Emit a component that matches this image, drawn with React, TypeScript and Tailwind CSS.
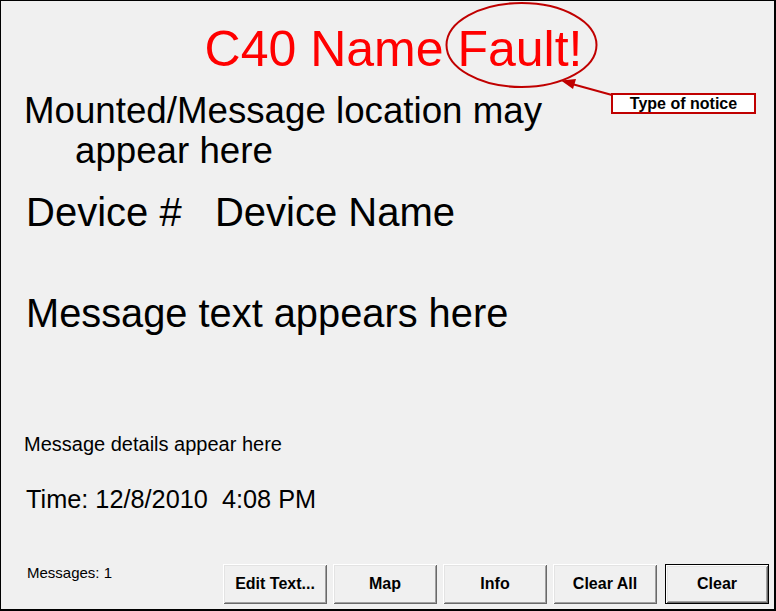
import React from "react";

const btnBase =
  "w-[104px] h-[40px] bg-[#f0f0f0] text-[16px] font-bold text-black flex items-center justify-center";
const bevel =
  "shadow-[inset_1px_1px_0_#ffffff,inset_-1px_-1px_0_#696969,inset_2px_2px_0_#e3e3e3,inset_-2px_-2px_0_#a0a0a0]";

function Btn({ label }: { label: string }) {
  return <div className={`${btnBase} ${bevel}`}>{label}</div>;
}

export default function App() {
  return (
    <div
      className="relative w-[776px] h-[611px]"
      style={{ fontFamily: '"Liberation Sans", Arial, sans-serif' }}
    >
      <div className="w-[776px] h-[611px] bg-[#f0f0f0] border-l border-t border-r-2 border-b-2 border-black flex flex-col text-black">
        <div className="pt-[20px] pl-[12px] text-center text-[50px] leading-[56px] text-[#ff0000]">
          C40 Name Fault!
        </div>
        <div className="mt-[14px] pl-[23px] text-[36.7px] leading-[40px]">
          <div>Mounted/Message location may</div>
          <div className="pl-[51px]">appear here</div>
        </div>
        <div className="mt-[19px] pl-[25px] text-[40px] leading-[44px] whitespace-pre">
          {"Device #   Device Name"}
        </div>
        <div className="mt-[57px] pl-[25px] text-[39.8px] leading-[44px]">
          Message text appears here
        </div>
        <div className="mt-[97px] pl-[23px] text-[20px] leading-[24px]">
          Message details appear here
        </div>
        <div className="mt-[28px] pl-[25px] text-[25.3px] leading-[30px] whitespace-pre">
          {"Time: 12/8/2010  4:08 PM"}
        </div>
        <div className="flex-1" />
        <div className="flex items-start justify-between pl-[26px] pr-[5px] pb-[5px]">
          <div className="mt-[1px] text-[15px] leading-[16px]">Messages: 1</div>
          <div className="flex gap-[6px]">
            <Btn label="Edit Text..." />
            <Btn label="Map" />
            <Btn label="Info" />
            <Btn label="Clear All" />
            <div className="ml-[2px] border border-black">
              <div
                className={`w-[102px] h-[38px] bg-[#f0f0f0] text-[16px] font-bold flex items-center justify-center ${bevel}`}
              >
                Clear
              </div>
            </div>
          </div>
        </div>
      </div>

      <svg
        className="absolute left-0 top-0 pointer-events-none"
        width="776"
        height="611"
        viewBox="0 0 776 611"
      >
        <ellipse cx="521.5" cy="45" rx="75" ry="42" fill="none" stroke="#c00000" strokeWidth="2" />
        <line x1="612" y1="95" x2="572" y2="84" stroke="#c00000" strokeWidth="2" />
        <polygon points="561,80.5 573,89 576,79" fill="#c00000" />
      </svg>

      <div className="absolute left-[611px] top-[93px] w-[145px] h-[21px] border-2 border-[#c00000] bg-white flex items-center justify-center text-[16px] font-bold leading-none">
        Type of notice
      </div>
    </div>
  );
}
